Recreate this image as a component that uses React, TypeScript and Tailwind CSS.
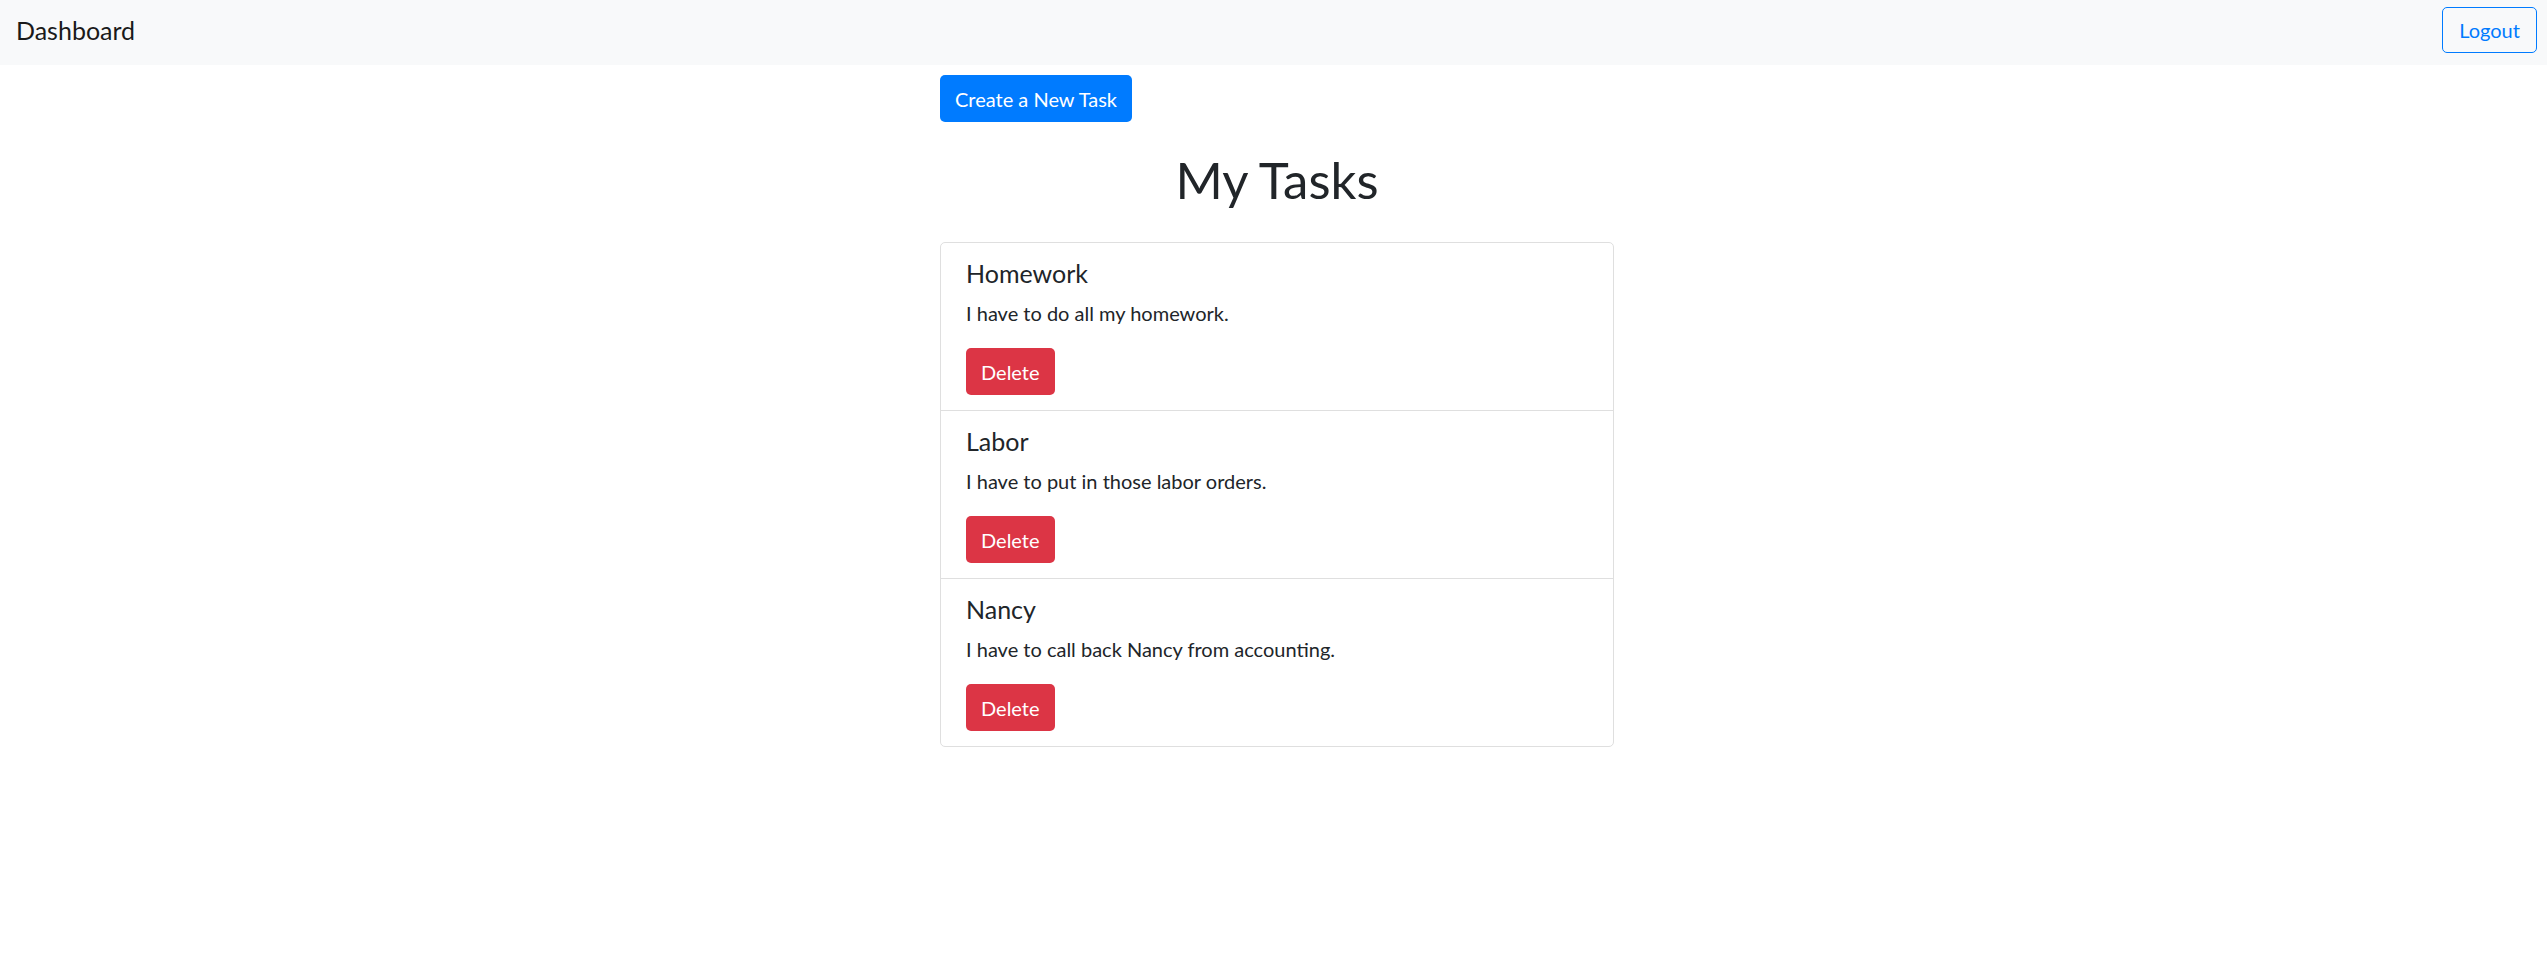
import React from 'react'

type Task = { title: string; body: string }

const tasks: Task[] = [
  { title: 'Homework', body: 'I have to do all my homework.' },
  { title: 'Labor', body: 'I have to put in those labor orders.' },
  { title: 'Nancy', body: 'I have to call back Nancy from accounting.' },
]

function TaskItem({ task, last }: { task: Task; last: boolean }) {
  return (
    <li className={`px-[25px] pt-[15px] pb-[15px] ${last ? '' : 'border-b border-[#dfdfdf]'}`}>
      <h5 className="text-[25px] leading-[30px] mb-[10px] text-[#212529]">{task.title}</h5>
      <p className="text-[20px] leading-[30px] mb-[20px] text-[#212529]">{task.body}</p>
      <button className="h-[47px] px-[15px] rounded-[5px] bg-[#dc3545] text-white text-[20px] leading-[30px]">
        Delete
      </button>
    </li>
  )
}

export default function App() {
  return (
    <div className="min-h-screen bg-white font-['Lato','Open_Sans',sans-serif] text-[#212529]">
      {/* Navbar */}
      <nav className="h-[65px] bg-[#f8f9fa] flex items-center justify-between pl-[16px] pr-[10px] pb-[5px]">
        <span className="text-[25px] leading-[30px] text-[#1a1a1a]">Dashboard</span>
        <button className="w-[95px] h-[46px] rounded-[5px] border border-[#007bff] text-[#007bff] text-[20px] leading-[30px]">
          Logout
        </button>
      </nav>

      {/* Content */}
      <div className="flex justify-center pl-[7px]">
        <div className="w-[674px] pt-[10px]">
          <button className="w-[192px] h-[47px] rounded-[5px] bg-[#007bff] text-white text-[20px] leading-[30px]">
            Create a New Task
          </button>

          <h1 className="mt-[27px] mb-[31px] text-center text-[51px] leading-[62px] text-[#212529]">My Tasks</h1>

          <ul className="border border-[#dfdfdf] rounded-[5px] bg-white">
            {tasks.map((t, i) => (
              <TaskItem key={t.title} task={t} last={i === tasks.length - 1} />
            ))}
          </ul>
        </div>
      </div>
    </div>
  )
}
